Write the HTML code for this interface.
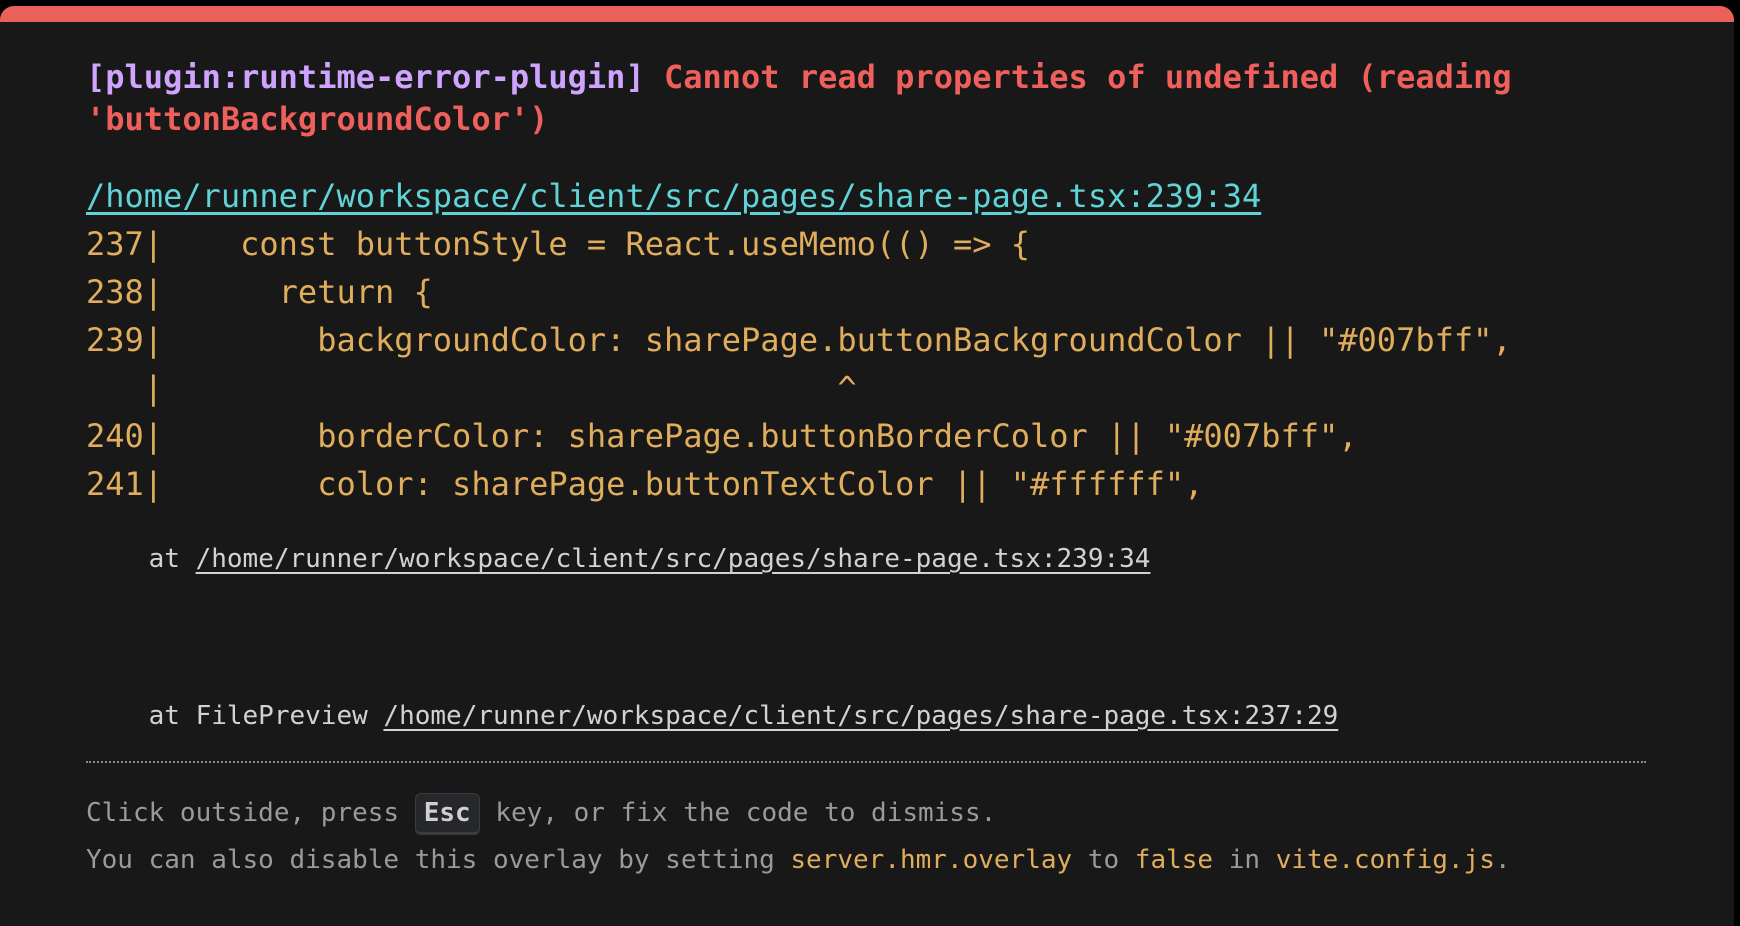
<!DOCTYPE html>
<html><head><meta charset="utf-8"><style>
html,body{margin:0;padding:0;width:1740px;height:914px;background:#000;overflow:hidden}
.panel{position:absolute;left:0;top:6px;width:1734px;height:920px;background:#181818;border-radius:14px 14px 0 0;overflow:hidden}
.bar{position:absolute;left:0;top:0;width:100%;height:16px;background:#ea605b}
.t{position:absolute;left:86px;white-space:pre;font-family:"DejaVu Sans Mono","Liberation Mono",monospace;margin:0}
.h{font-size:32px;line-height:42px;font-weight:bold;top:50px}
.p{color:#cfa4ff}.r{color:#ef5f5b}
.c{font-size:32px;line-height:48px;color:#e0ad5c}
.link{color:#5fd3d6;text-decoration:underline;text-underline-offset:5px}
.s{font-size:26px;line-height:40px;color:#d2d2d2}
.s u{text-underline-offset:5px}
.f{font-size:26px;line-height:40px;color:#9a9a9a}
.y{color:#e0ad5c}
kbd{display:inline-block;font-family:inherit;font-weight:bold;color:#d0d0d0;background:#26272a;border:1px solid #3a3b3f;border-bottom:3px solid #3a3b3f;border-radius:6px;padding:0 8px;line-height:38px;margin:0}
.dot{position:absolute;left:86px;top:755px;width:1560px;border-top:2px dotted #8a8a8a}
</style></head><body>
<div class="panel">
<div class="bar"></div>
<div class="t h"><span class="p">[plugin:runtime-error-plugin]</span> <span class="r">Cannot read properties of undefined (reading
'buttonBackgroundColor')</span></div>
<div class="t c link" style="top:166px">/home/runner/workspace/client/src/pages/share-page.tsx:239:34</div>
<div class="t c" style="top:214px">237|    const buttonStyle = React.useMemo(() =&gt; {
238|      return {
239|        backgroundColor: sharePage.buttonBackgroundColor || "#007bff",
   |                                   ^
240|        borderColor: sharePage.buttonBorderColor || "#007bff",
241|        color: sharePage.buttonTextColor || "#ffffff",</div>
<div class="t s" style="top:533px">    at <u>/home/runner/workspace/client/src/pages/share-page.tsx:239:34</u></div>
<div class="t s" style="top:690px">    at FilePreview <u>/home/runner/workspace/client/src/pages/share-page.tsx:237:29</u></div>
<div class="dot"></div>
<div class="t f" style="top:787px">Click outside, press <kbd>Esc</kbd> key, or fix the code to dismiss.</div>
<div class="t f" style="top:834px">You can also disable this overlay by setting <span class="y">server.hmr.overlay</span> to <span class="y">false</span> in <span class="y">vite.config.js</span>.</div>
</div>
</body></html>
